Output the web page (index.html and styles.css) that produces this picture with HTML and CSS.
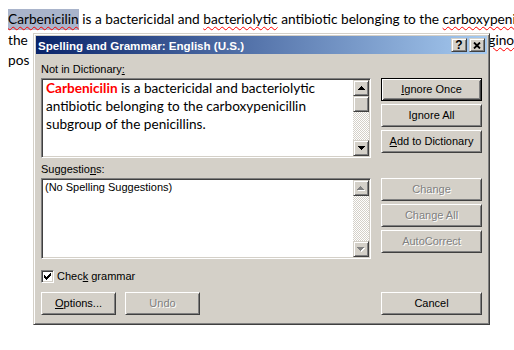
FILE: index.html
```html
<!DOCTYPE html>
<html lang="en">
<head>
    <meta charset="UTF-8">
    <meta name="viewport" content="width=device-width, initial-scale=1.0">
    <title>Spelling and Grammar</title>
    <link rel="stylesheet" href="styles.css">
</head>
<body>
    <div class="doc">
        <p class="doc-line"><span class="selected squiggle">Carbenicilin</span> is a bactericidal and <span class="squiggle">bacteriolytic</span> antibiotic belonging to the <span class="squiggle">carboxypenicillin</span> subgroup</p>
        <p class="doc-line">the <span class="covered">penicillins. It has Gram-negative coverage which includes Pseudomonas aeru</span><span class="squiggle">ginosa</span> but limited Gram-</p>
        <p class="doc-line">pos<span class="covered-tail">itive coverage.</span></p>
    </div>

    <div class="dialog">
        <div class="caption">
            <span class="caption-title">Spelling and Grammar: English (U.S.)</span>
            <div class="caption-buttons">
                <button class="caption-btn">?</button>
                <button class="caption-btn">
                    <svg width="8" height="7" viewBox="0 0 8 7"><path d="M1 0.5 L7 6.5 M7 0.5 L1 6.5" stroke="#000" stroke-width="1.8"/></svg>
                </button>
            </div>
        </div>

        <div class="dialog-body">
            <label class="field-label label-dict">Not in Dictionary<u>:</u></label>
            <div class="field field-dict">
                <div class="field-text"><b class="bad-word">Carbenicilin</b> is a bactericidal and bacteriolytic antibiotic belonging to the carboxypenicillin subgroup of the penicillins.</div>
                <div class="scrollbar">
                    <div class="sb-btn">
                        <svg width="7" height="4" viewBox="0 0 7 4" shape-rendering="crispEdges"><path d="M3 0h1v1h1v1h1v1h1v1h-7v-1h1v-1h1v-1h1z" fill="#000"/></svg>
                    </div>
                    <div class="sb-thumb"></div>
                    <div class="sb-track"></div>
                    <div class="sb-btn">
                        <svg width="7" height="4" viewBox="0 0 7 4" shape-rendering="crispEdges"><path d="M0 0h7v1h-1v1h-1v1h-1v1h-1v-1h-1v-1h-1v-1h-1z" fill="#000"/></svg>
                    </div>
                </div>
            </div>
            <div class="btn-stack stack-top">
                <button class="btn default"><u>I</u>gnore Once</button>
                <button class="btn">I<u>g</u>nore All</button>
                <button class="btn"><u>A</u>dd to Dictionary</button>
            </div>

            <label class="field-label label-sugg">Suggestio<u>n</u>s:</label>
            <div class="field field-sugg">
                <div class="field-text list-text">(No Spelling Suggestions)</div>
                <div class="scrollbar">
                    <div class="sb-btn">
                        <svg width="8" height="5" viewBox="0 0 8 5" shape-rendering="crispEdges"><path d="M4 1h1v1h1v1h1v1h1v1h-7v-1h1v-1h1v-1h1z" fill="#fff"/><path d="M3 0h1v1h1v1h1v1h1v1h-7v-1h1v-1h1v-1h1z" fill="#808080"/></svg>
                    </div>
                    <div class="sb-track"></div>
                    <div class="sb-btn">
                        <svg width="8" height="5" viewBox="0 0 8 5" shape-rendering="crispEdges"><path d="M1 1h7v1h-1v1h-1v1h-1v1h-1v-1h-1v-1h-1v-1h-1z" fill="#fff"/><path d="M0 0h7v1h-1v1h-1v1h-1v1h-1v-1h-1v-1h-1v-1h-1z" fill="#808080"/></svg>
                    </div>
                </div>
            </div>
            <div class="btn-stack stack-bottom">
                <button class="btn" disabled>Change</button>
                <button class="btn" disabled>Change All</button>
                <button class="btn" disabled>AutoCorrect</button>
            </div>

            <div class="check-row">
                <span class="checkbox">
                    <svg width="7" height="7" viewBox="0 0 7 7" shape-rendering="crispEdges"><path d="M0 2h1v1h1v1h1v-1h1v-1h1v-1h1v-1h1v3h-1v1h-1v1h-1v1h-1v1h-1v-1h-1v-1h-1v-1h-1z" fill="#000"/></svg>
                </span>
                <span>Chec<u>k</u> grammar</span>
            </div>

            <div class="actions">
                <button class="btn btn-small"><u>O</u>ptions...</button>
                <button class="btn btn-small" disabled>Undo</button>
            </div>
            <button class="btn btn-cancel">Cancel</button>
        </div>
    </div>
</body>
</html>
```

FILE: styles.css
```css
* {
    box-sizing: border-box;
}
body {
    margin: 0;
    padding: 9px 8px 0;
    height: 350px;
    background: #fff;
    font-family: Lato, 'Liberation Sans', sans-serif;
    overflow: hidden;
}
.doc-line {
    margin: 0;
    font-size: 13.7px;
    line-height: 20px;
    white-space: nowrap;
    color: #000;
}
.selected {
    display: inline-block;
    padding-bottom: 1px;
    background-color: #a9b4cb;
}
.squiggle {
    text-decoration: underline wavy #f00;
    text-decoration-thickness: 1px;
    text-underline-offset: 2px;
}
/* text that sits under the dialog */
.covered {
    display: inline-block;
    width: 457px;
    height: 20px;
    padding-left: 8px;
    overflow: hidden;
    vertical-align: top;
}
.covered-tail {
    margin-left: 8px;
}

/* Dialog window */
.dialog {
    position: absolute;
    left: 33px;
    top: 33px;
    width: 457px;
    padding: 2px;
    background-color: #d4d0c8;
    border: 1px solid;
    border-color: #d4d0c8 #404040 #404040 #d4d0c8;
    box-shadow: inset 1px 1px #fff, inset -1px -1px #808080;
    font-family: 'Liberation Sans', sans-serif;
    font-size: 11px;
    color: #000;
}
.caption {
    height: 18px;
    display: flex;
    align-items: center;
    justify-content: space-between;
    padding: 0 2px;
    background: linear-gradient(to right, #0a246a, #a6caf0);
}
.caption-title {
    color: #fff;
    font-weight: bold;
    font-size: 11.6px;
}
.caption-buttons {
    display: flex;
    gap: 2px;
}
.caption-btn,
.sb-btn,
.sb-thumb {
    width: 16px;
    background-color: #d4d0c8;
    border: 1px solid;
    border-color: #d4d0c8 #404040 #404040 #d4d0c8;
    box-shadow: inset 1px 1px #fff, inset -1px -1px #808080;
}
.caption-btn {
    height: 14px;
    padding: 0;
    display: flex;
    align-items: center;
    justify-content: center;
    font-family: 'Liberation Sans', sans-serif;
    font-size: 12px;
    font-weight: bold;
    line-height: 12px;
    color: #000;
}
.dialog-body {
    display: grid;
    grid-template-columns: 330px 101px;
    grid-template-rows: 24px 80px 20px 81px 33px 23px;
    grid-template-areas:
        "label-dict ."
        "field-dict stack-top"
        "label-sugg ."
        "field-sugg stack-bottom"
        "check ."
        "actions cancel";
    column-gap: 10px;
    padding: 0 5px 7px;
}
.field-label {
    align-self: end;
    margin-bottom: 2px;
    line-height: 13px;
}
.label-dict { grid-area: label-dict; }
.label-sugg { grid-area: label-sugg; }
.field-dict { grid-area: field-dict; }
.field-sugg { grid-area: field-sugg; }
.stack-top { grid-area: stack-top; }
.stack-bottom { grid-area: stack-bottom; }
.check-row { grid-area: check; }
.actions { grid-area: actions; }
.btn-cancel { grid-area: cancel; }

/* Sunken text fields */
.field {
    display: flex;
    background-color: #fff;
    border: 1px solid;
    border-color: #808080 #fff #fff #808080;
    box-shadow: inset 1px 1px #404040, inset -1px -1px #d4d0c8;
    padding: 1px;
}
.field-text {
    flex: 1;
    margin-top: -1px;
    padding: 0 2px 0 3px;
    font-family: Lato, 'Liberation Sans', sans-serif;
    font-size: 13.6px;
    line-height: 18px;
    overflow: hidden;
}
.bad-word {
    color: #f00;
}
.list-text {
    margin-top: 0;
    padding: 1px 2px;
    font-family: 'Liberation Sans', sans-serif;
    font-size: 11px;
    line-height: 13px;
}
.scrollbar {
    width: 16px;
    display: flex;
    flex-direction: column;
}
.sb-btn {
    height: 16px;
    display: flex;
    align-items: center;
    justify-content: center;
}
.sb-thumb {
    height: 16px;
}
.sb-track {
    flex: 1;
    background: repeating-conic-gradient(#d4d0c8 0 25%, #fff 0 50%) 0 0 / 2px 2px;
}

/* Push buttons */
.btn-stack {
    display: flex;
    flex-direction: column;
    gap: 3px;
}
.btn {
    height: 23px;
    padding: 0;
    background-color: #d4d0c8;
    border: 1px solid;
    border-color: #fff #404040 #404040 #fff;
    box-shadow: inset 1px 1px #d4d0c8, inset -1px -1px #808080;
    font-family: 'Liberation Sans', sans-serif;
    font-size: 11px;
    line-height: 13px;
    color: #000;
}
.btn.default {
    border-color: #000;
    box-shadow: inset 1px 1px #fff, inset -1px -1px #404040, inset 2px 2px #d4d0c8, inset -2px -2px #808080;
}
.btn:disabled {
    color: #808080;
    text-shadow: 1px 1px 0 #fff;
}
.actions {
    display: flex;
    gap: 9px;
}
.btn-small {
    width: 75px;
}

/* Checkbox */
.check-row {
    display: flex;
    align-items: flex-start;
    gap: 3px;
    padding-top: 11px;
    line-height: 13px;
}
.checkbox {
    width: 13px;
    height: 13px;
    display: flex;
    align-items: center;
    justify-content: center;
    background-color: #fff;
    border: 1px solid;
    border-color: #808080 #fff #fff #808080;
    box-shadow: inset 1px 1px #404040, inset -1px -1px #d4d0c8;
}
```
